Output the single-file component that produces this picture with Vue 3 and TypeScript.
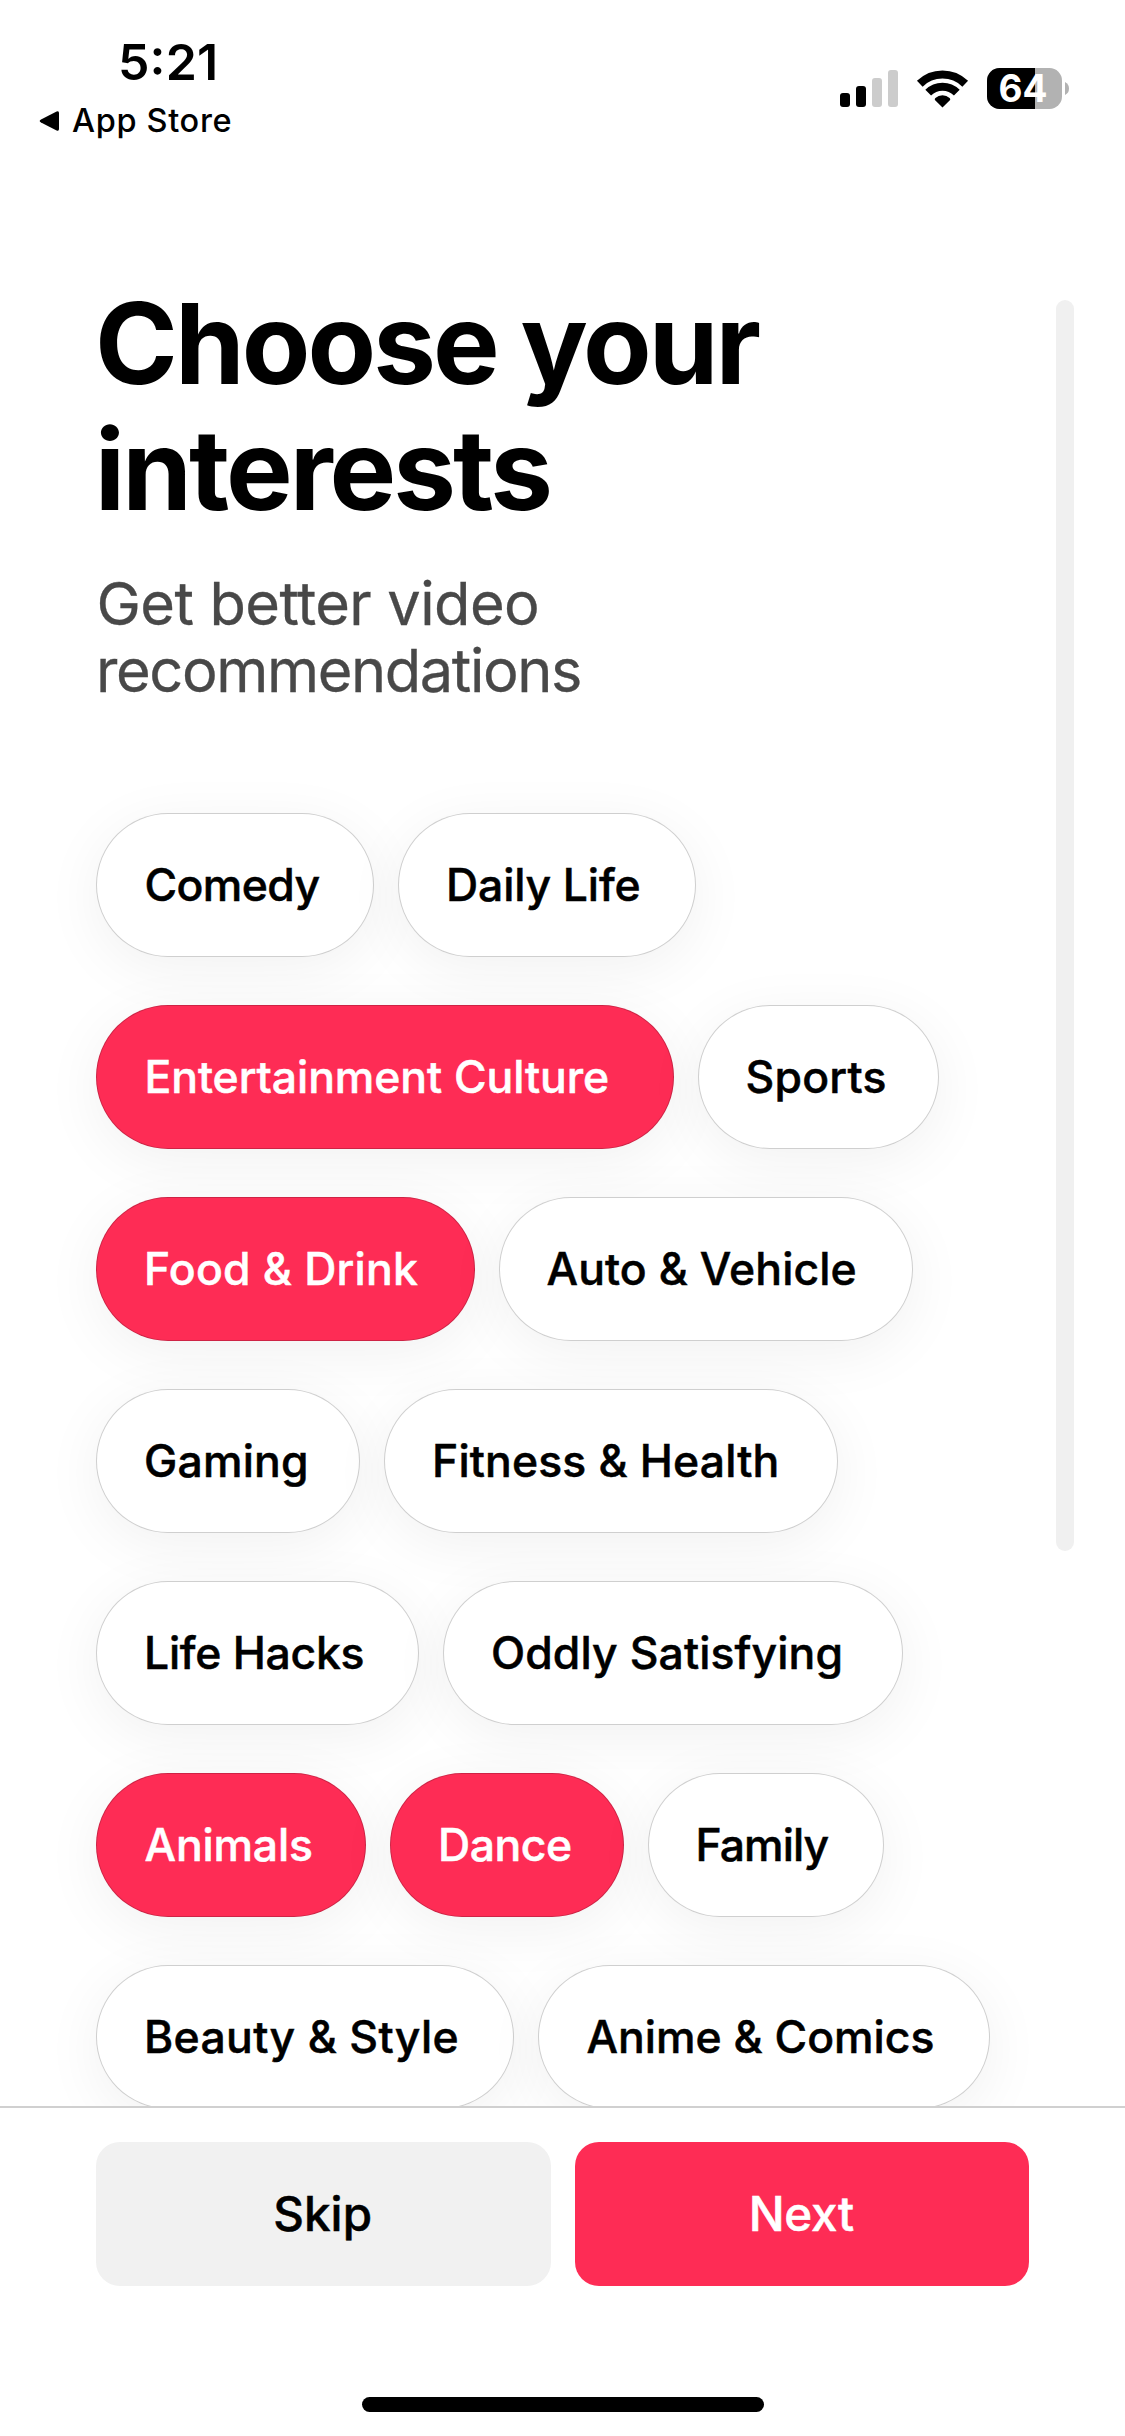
<script setup lang="ts">
import { ref, type Directive } from 'vue'

interface Chip {
  label: string
  width: number
  ink: [number, number]
  selected?: boolean
}

const rows = ref<Chip[][]>([
  [
    { label: 'Comedy', width: 277.5, ink: [49.5, 173] },
    { label: 'Daily Life', width: 298, ink: [50.5, 190.5] },
  ],
  [
    { label: 'Entertainment Culture', width: 578, ink: [50.5, 460.5], selected: true },
    { label: 'Sports', width: 241, ink: [48.5, 137] },
  ],
  [
    { label: 'Food & Drink', width: 379, ink: [50, 271], selected: true },
    { label: 'Auto & Vehicle', width: 414, ink: [47.5, 308] },
  ],
  [
    { label: 'Gaming', width: 264, ink: [49, 160] },
    { label: 'Fitness & Health', width: 454, ink: [50, 341.5] },
  ],
  [
    { label: 'Life Hacks', width: 323, ink: [50, 215.5] },
    { label: 'Oddly Satisfying', width: 460, ink: [49, 347.5] },
  ],
  [
    { label: 'Animals', width: 270, ink: [48.5, 165.5], selected: true },
    { label: 'Dance', width: 233.5, ink: [50, 130], selected: true },
    { label: 'Family', width: 236, ink: [50, 130] },
  ],
  [
    { label: 'Beauty & Style', width: 418, ink: [50, 310.5] },
    { label: 'Anime & Comics', width: 452, ink: [48.5, 345] },
  ],
])

// Tracks a single line of text so its visible glyphs start at `left` and span `width` px.
const vFit: Directive<HTMLElement, [number, number]> = {
  mounted(el, { value: [left, width] }) {
    const ctx = document.createElement('canvas').getContext('2d')
    const text = (el.textContent ?? '').trim()
    if (!ctx || text.length < 2) return
    const cs = getComputedStyle(el)
    ctx.font = `${cs.fontWeight} ${cs.fontSize} ${cs.fontFamily}`
    const m = ctx.measureText(text)
    const ink = m.actualBoundingBoxLeft + m.actualBoundingBoxRight
    el.style.letterSpacing = `${(width - ink) / (text.length - 1)}px`
    el.style.marginLeft = `${left + m.actualBoundingBoxLeft}px`
  },
}

function toggle(chip: Chip) {
  chip.selected = !chip.selected
}
</script>

<template>
  <div class="screen">
    <main class="content">
      <header class="status">
        <div class="status-left">
          <div v-fit="[121, 94]" class="time">5:21</div>
          <div class="back">
            <svg class="back-arrow" width="21" height="22" viewBox="0 0 21 22">
              <path d="M2 9.6 17.6 1.6Q20 .6 20 3V19Q20 21.4 17.6 20.4L2 12.4Q-.6 11 2 9.6Z" />
            </svg>
            <span v-fit="[12, 158.5]" class="back-label">App Store</span>
          </div>
        </div>
        <svg class="status-icons" width="232" height="44" viewBox="838 66 232 44">
          <rect x="840" y="93" width="10" height="14" rx="3" />
          <rect x="856" y="86" width="10" height="21" rx="3" />
          <rect x="872" y="78" width="10" height="29" rx="3" fill="#ccc" />
          <rect x="888" y="70" width="10" height="37" rx="3" fill="#ccc" />
          <g fill="none" stroke="#000" stroke-width="8.2">
            <path d="M919.8 83.7a32.6 32.6 0 0 1 45.4 0" />
            <path d="M928.2 92.6a20.4 20.4 0 0 1 28.6 0" />
          </g>
          <path d="M942.5 107.5 934.9 100Q934.4 98.9 935.4 98a10.3 10.3 0 0 1 14.2 0Q950.6 98.900 950.1 100Z" />
          <clipPath id="battery-shape"><rect x="987" y="68" width="75" height="41" rx="12.5" /></clipPath>
          <g clip-path="url(#battery-shape)">
            <rect x="987" y="68" width="75" height="41" fill="#b2b2b2" />
            <rect x="987" y="68" width="48" height="41" />
          </g>
          <path d="M1065 82Q1069 84 1069 88.5T1065 95Z" fill="#b2b2b2" />
          <text class="battery-text" x="998.5" y="102" textLength="49" lengthAdjust="spacingAndGlyphs">64</text>
        </svg>
      </header>

      <h1 class="title">
        <span v-fit="[4, 659.5]">Choose your</span>
        <span v-fit="[4.8, 448.5]">interests</span>
      </h1>
      <p class="subtitle">
        <span v-fit="[3.5, 437.5]">Get better video</span>
        <span v-fit="[4, 480]">recommendations</span>
      </p>

      <div class="chips">
        <div v-for="(row, i) in rows" :key="i" class="row">
          <button
            v-for="chip in row"
            :key="chip.label"
            class="chip"
            :class="{ selected: chip.selected }"
            :style="{ width: chip.width + 'px' }"
            @click="toggle(chip)"
          >
            <span v-fit="chip.ink">{{ chip.label }}</span>
          </button>
        </div>
      </div>
      <div class="scrollbar"></div>
    </main>

    <footer class="footer">
      <div class="actions">
        <button class="action skip"><span v-fit="[179.2, 95.5]">Skip</span></button>
        <button class="action next"><span v-fit="[177.2, 102.2]">Next</span></button>
      </div>
      <div class="home-indicator"></div>
    </footer>
  </div>
</template>

<style>
body {
  margin: 0;
  background: #fff;
}
</style>

<style scoped>
.screen {
  width: 1125px;
  height: 2436px;
  display: flex;
  flex-direction: column;
  overflow: hidden;
  background: #fff;
  color: #000;
  font-family: Inter, 'Liberation Sans', sans-serif;
}

.content {
  position: relative;
  height: 2106px;
  overflow: hidden;
}

.status {
  display: flex;
  justify-content: space-between;
  height: 280px;
  box-sizing: border-box;
  padding-right: 55px;
}

.status-left {
  padding-top: 32px;
  white-space: nowrap;
}

.time {
  font-size: 50px;
  line-height: 60px;
  font-weight: 600;
  font-feature-settings: 'case';
}

.back {
  display: flex;
  align-items: center;
  margin-top: 9px;
  padding-left: 39px;
  height: 40px;
}

.back-label {
  font-size: 32.5px;
  line-height: 40px;
  font-weight: 500;
}

.status-icons {
  margin-top: 66px;
}

.battery-text {
  font: 700 38px Inter, 'Liberation Sans', sans-serif;
  fill: #fff;
}

.title {
  margin: 0;
  padding-left: 96px;
  font-size: 112px;
  line-height: 126px;
  font-weight: 700;
}

.title span,
.subtitle span {
  display: block;
  white-space: nowrap;
}

.subtitle {
  margin: 38px 0 0;
  padding-left: 96px;
  font-size: 59.5px;
  line-height: 67px;
  color: #484848;
  -webkit-text-stroke: 0.3px #484848;
}

.chips {
  display: flex;
  flex-direction: column;
  gap: 48px;
  margin-top: 109px;
  padding-left: 96px;
}

.row {
  display: flex;
  gap: 24px;
}

.chip {
  display: flex;
  align-items: center;
  flex: none;
  height: 144px;
  box-sizing: border-box;
  padding: 0;
  border: 1px solid rgba(0, 0, 0, 0.19);
  border-radius: 72px;
  background: #fff;
  box-shadow: 0 12px 60px rgba(0, 0, 0, 0.06);
  color: #000;
  font: 500 44.5px/60px Inter, 'Liberation Sans', sans-serif;
  -webkit-text-stroke: 0.5px currentColor;
  text-align: left;
  white-space: nowrap;
}

.chip.selected {
  background: #fe2c55;
  color: #fff;
}

.scrollbar {
  position: absolute;
  top: 300px;
  right: 51px;
  width: 18px;
  height: 1251px;
  border-radius: 9px;
  background: #f0f0f0;
}

.footer {
  display: flex;
  flex: 1;
  flex-direction: column;
  align-items: center;
  border-top: 2px solid #d0d0d0;
}

.actions {
  display: flex;
  gap: 24px;
  width: 933px;
  margin-top: 34px;
}

.action {
  display: flex;
  align-items: center;
  flex: 1;
  height: 144px;
  padding: 0;
  border: 0;
  border-radius: 24px;
  font: 500 47.5px/60px Inter, 'Liberation Sans', sans-serif;
  -webkit-text-stroke: 0.5px currentColor;
  text-align: left;
  white-space: nowrap;
}

.skip {
  background: #f1f1f1;
  color: #000;
}

.next {
  background: #fe2c55;
  color: #fff;
}

.home-indicator {
  width: 402px;
  height: 15px;
  margin-top: 111px;
  border-radius: 7.5px;
  background: #000;
}
</style>
